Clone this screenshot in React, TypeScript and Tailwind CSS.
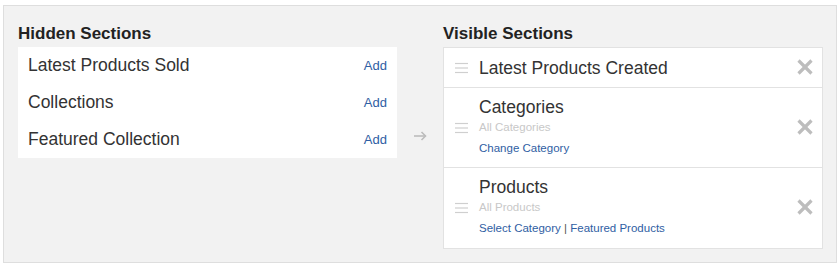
import React from "react";

const font = { fontFamily: '"Liberation Sans", Arial, sans-serif' };

const hidden = ["Latest Products Sold", "Collections", "Featured Collection"];

type Visible = {
  title: string;
  sub?: string;
  links?: string[];
};

const visible: Visible[] = [
  { title: "Latest Products Created" },
  { title: "Categories", sub: "All Categories", links: ["Change Category"] },
  { title: "Products", sub: "All Products", links: ["Select Category", "Featured Products"] },
];

function Handle() {
  return (
    <svg width="14" height="12" viewBox="0 0 14 12" className="shrink-0">
      <g stroke="#cfcfcf" strokeWidth="1.2">
        <line x1="0" y1="1.5" x2="13" y2="1.5" />
        <line x1="0" y1="6" x2="13" y2="6" />
        <line x1="0" y1="10.5" x2="13" y2="10.5" />
      </g>
    </svg>
  );
}

function CloseX() {
  return (
    <svg width="16" height="16" viewBox="0 0 16 16" className="shrink-0">
      <g stroke="#bdbdbd" strokeWidth="3.2" strokeLinecap="butt">
        <line x1="1.5" y1="1.5" x2="14.5" y2="14.5" />
        <line x1="14.5" y1="1.5" x2="1.5" y2="14.5" />
      </g>
    </svg>
  );
}

function Arrow() {
  return (
    <svg width="13" height="10" viewBox="0 0 13 10">
      <g stroke="#bcbcbc" strokeWidth="1.6" fill="none">
        <line x1="0" y1="5" x2="11.5" y2="5" />
        <polyline points="7.5,1 11.5,5 7.5,9" />
      </g>
    </svg>
  );
}

export default function App() {
  return (
    <div className="bg-white w-[840px] h-[266px] pt-[5px] pl-[3px]" style={font}>
      <div className="w-[834px] h-[258px] bg-[#f2f2f2] border border-[#dedede] pt-[18px] pl-[14px] flex">
        <div className="w-[379px]">
          <h2 className="text-[17px] leading-[20px] font-bold text-[#222]">Hidden Sections</h2>
          <div className="mt-[3px] bg-white">
            {hidden.map((name) => (
              <div key={name} className="h-[37px] flex items-center justify-between pl-[10px] pr-[10px]">
                <span className="text-[17.5px] text-[#333]">{name}</span>
                <span className="text-[13px] text-[#2f5ea3]">Add</span>
              </div>
            ))}
          </div>
        </div>

        <div className="w-[46px] flex justify-center pt-[107px]">
          <div className="h-[10px]">
            <Arrow />
          </div>
        </div>

        <div className="w-[380px]">
          <h2 className="text-[17px] leading-[20px] font-bold text-[#222]">Visible Sections</h2>
          <div className="mt-[3px] bg-white border border-[#e2e2e2] divide-y divide-[#e2e2e2]">
            {visible.map((v) => (
              <div
                key={v.title}
                className={`flex items-center pl-[11px] pr-[9px] ${v.sub ? "h-[80px]" : "h-[40px]"}`}
              >
                <Handle />
                <div className="flex-1 pl-[10px]">
                  <div className="text-[17.5px] leading-[20px] text-[#333]">{v.title}</div>
                  {v.sub && (
                    <>
                      <div className="text-[11.5px] leading-[21px] text-[#c8c8c8]">{v.sub}</div>
                      <div className="text-[11.5px] leading-[21px] text-[#2f5ea3]">
                        {v.links!.map((l, i) => (
                          <span key={l}>
                            {i > 0 && <span className="text-[#555]"> | </span>}
                            {l}
                          </span>
                        ))}
                      </div>
                    </>
                  )}
                </div>
                <div className="mt-[-2px]">
                  <CloseX />
                </div>
              </div>
            ))}
          </div>
        </div>
      </div>
    </div>
  );
}
